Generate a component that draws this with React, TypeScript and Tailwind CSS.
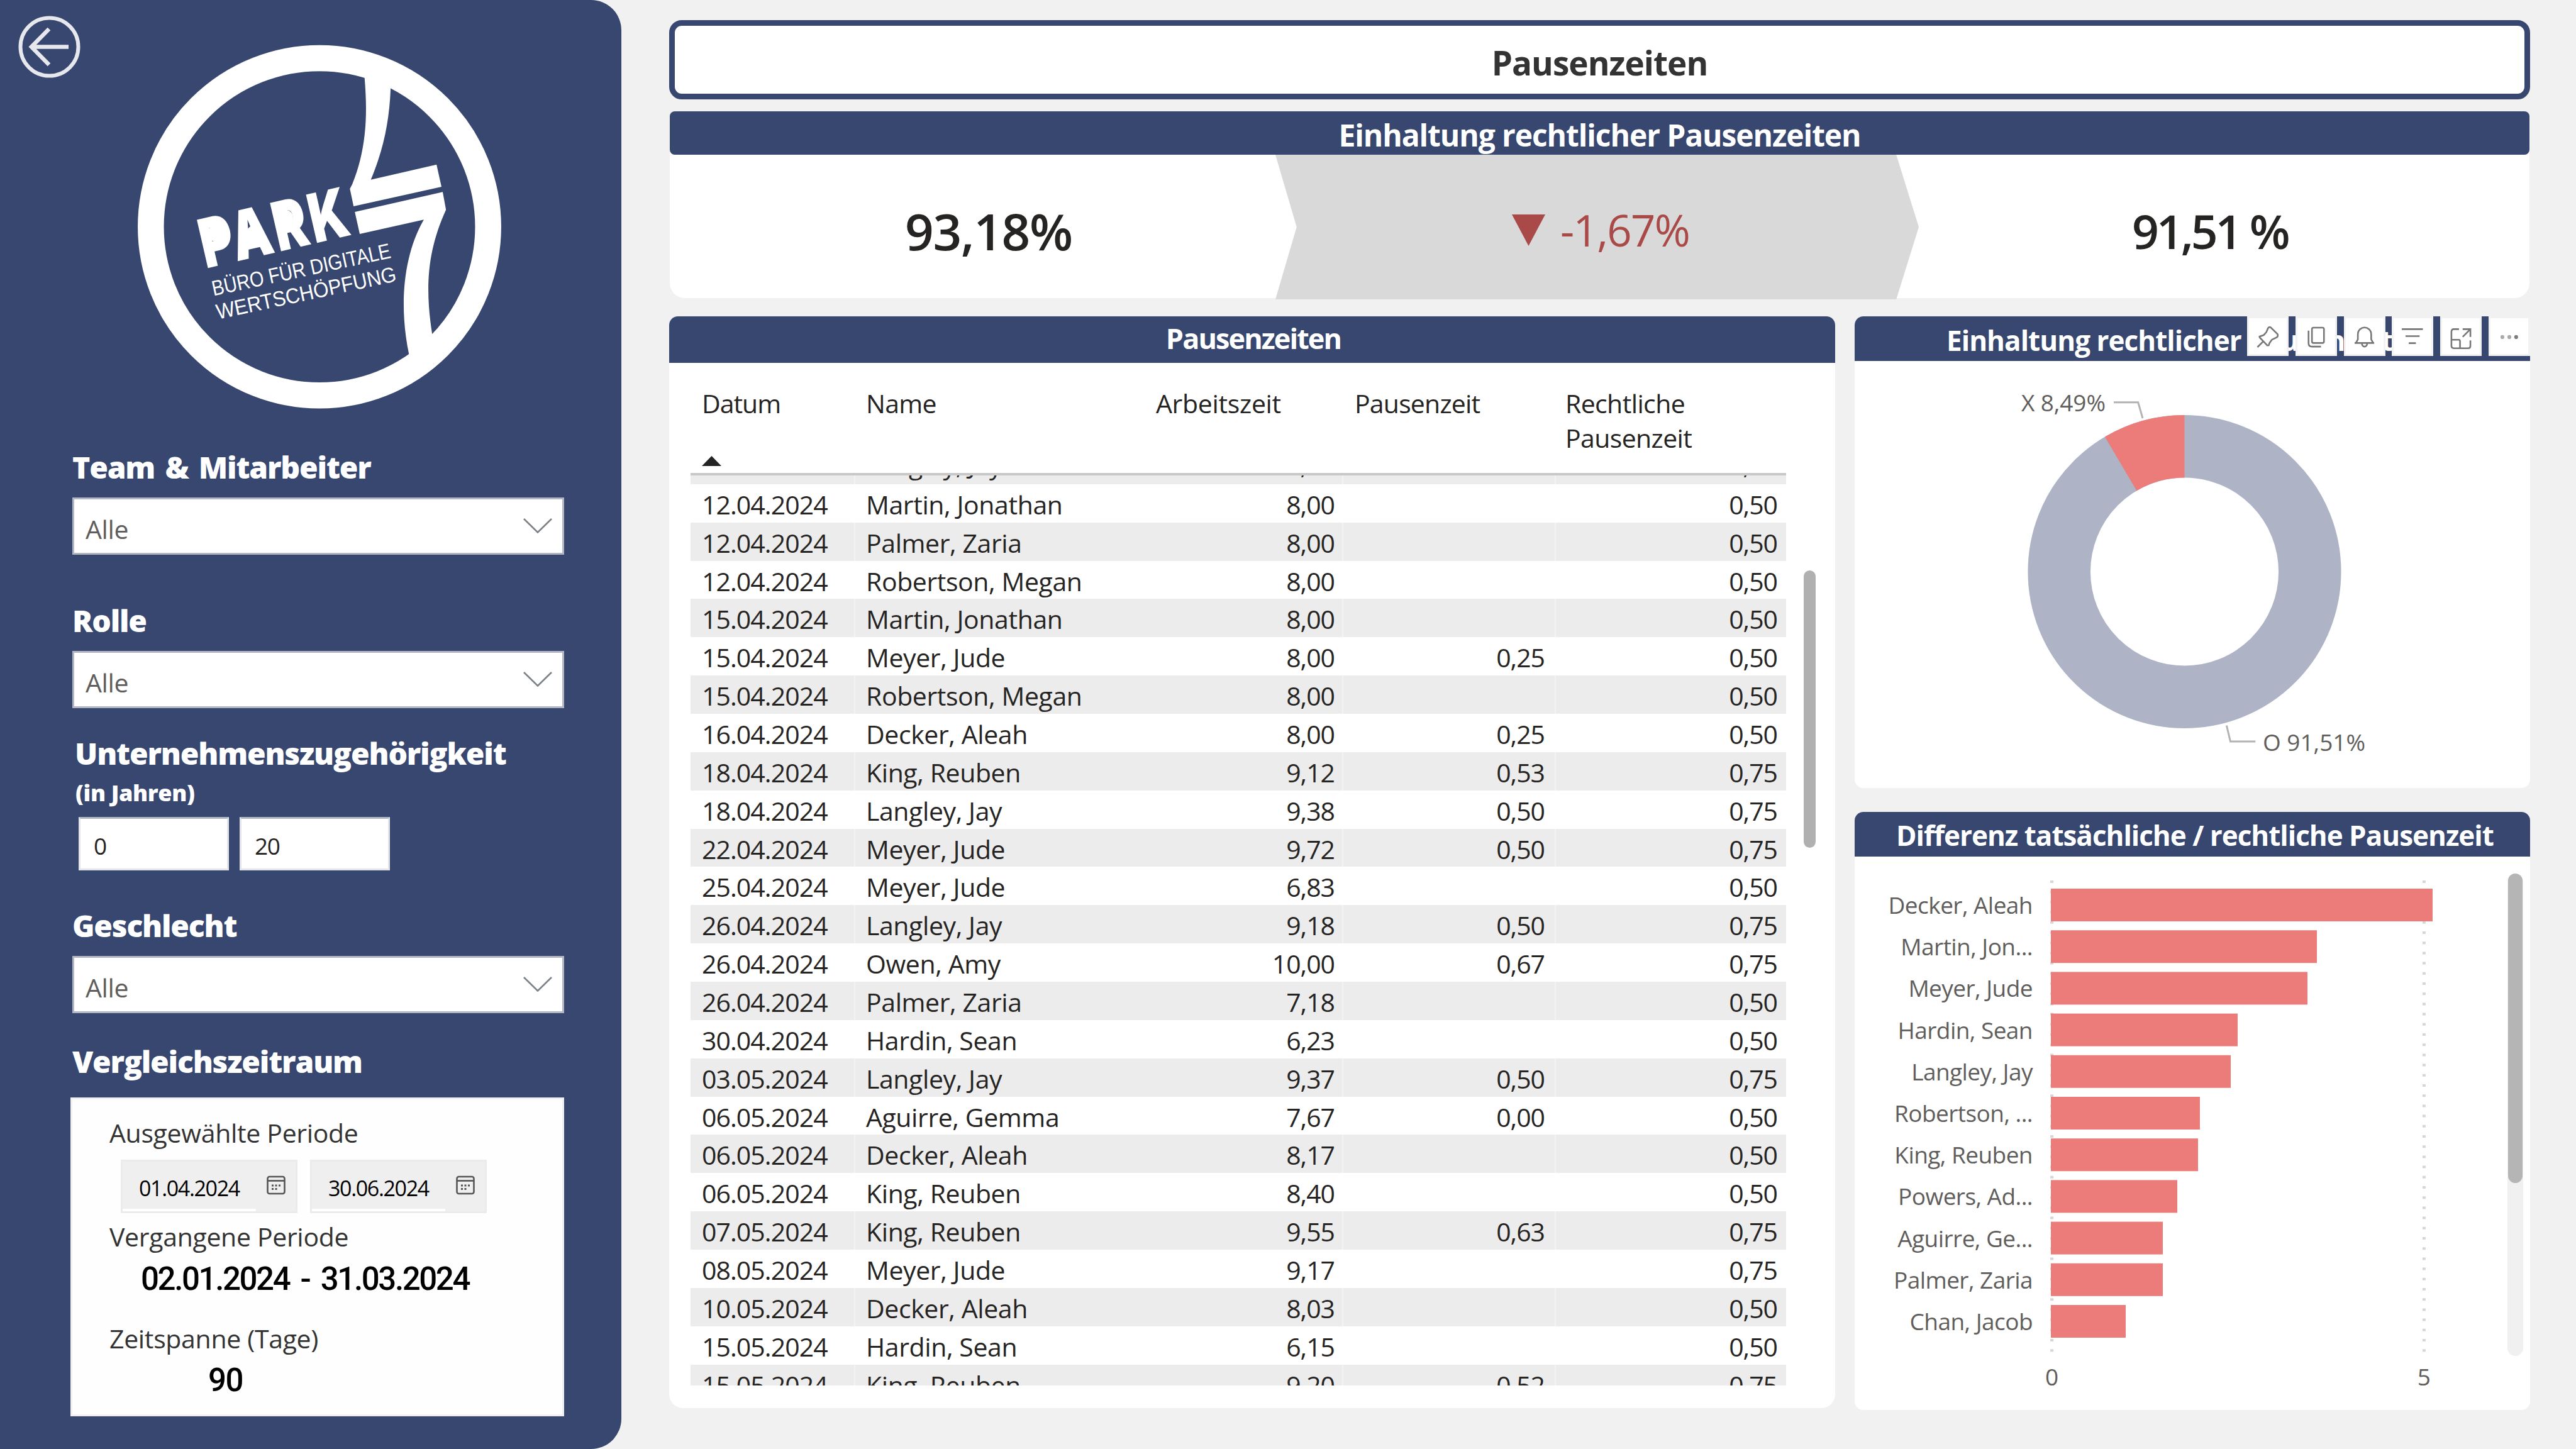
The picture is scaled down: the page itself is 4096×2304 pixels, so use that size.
import React from "react";

const SANS = "font-['Open_Sans','Noto_Sans',sans-serif]";

type Row = [string, string, string, string, string];

const rows: Row[] = [
  ["12.04.2024", "Langley, Jay", "8,00", "", "0,50"],
  ["12.04.2024", "Martin, Jonathan", "8,00", "", "0,50"],
  ["12.04.2024", "Palmer, Zaria", "8,00", "", "0,50"],
  ["12.04.2024", "Robertson, Megan", "8,00", "", "0,50"],
  ["15.04.2024", "Martin, Jonathan", "8,00", "", "0,50"],
  ["15.04.2024", "Meyer, Jude", "8,00", "0,25", "0,50"],
  ["15.04.2024", "Robertson, Megan", "8,00", "", "0,50"],
  ["16.04.2024", "Decker, Aleah", "8,00", "0,25", "0,50"],
  ["18.04.2024", "King, Reuben", "9,12", "0,53", "0,75"],
  ["18.04.2024", "Langley, Jay", "9,38", "0,50", "0,75"],
  ["22.04.2024", "Meyer, Jude", "9,72", "0,50", "0,75"],
  ["25.04.2024", "Meyer, Jude", "6,83", "", "0,50"],
  ["26.04.2024", "Langley, Jay", "9,18", "0,50", "0,75"],
  ["26.04.2024", "Owen, Amy", "10,00", "0,67", "0,75"],
  ["26.04.2024", "Palmer, Zaria", "7,18", "", "0,50"],
  ["30.04.2024", "Hardin, Sean", "6,23", "", "0,50"],
  ["03.05.2024", "Langley, Jay", "9,37", "0,50", "0,75"],
  ["06.05.2024", "Aguirre, Gemma", "7,67", "0,00", "0,50"],
  ["06.05.2024", "Decker, Aleah", "8,17", "", "0,50"],
  ["06.05.2024", "King, Reuben", "8,40", "", "0,50"],
  ["07.05.2024", "King, Reuben", "9,55", "0,63", "0,75"],
  ["08.05.2024", "Meyer, Jude", "9,17", "", "0,75"],
  ["10.05.2024", "Decker, Aleah", "8,03", "", "0,50"],
  ["15.05.2024", "Hardin, Sean", "6,15", "", "0,50"],
  ["15.05.2024", "King, Reuben", "9,20", "0,52", "0,75"],
];

const bars: [string, number][] = [
  ["Decker, Aleah", 607],
  ["Martin, Jon...", 423],
  ["Meyer, Jude", 408],
  ["Hardin, Sean", 297],
  ["Langley, Jay", 286],
  ["Robertson, ...", 237],
  ["King, Reuben", 234],
  ["Powers, Ad...", 201],
  ["Aguirre, Ge...", 178],
  ["Palmer, Zaria", 178],
  ["Chan, Jacob", 119],
];

function BackIcon() {
  return (
    <svg className="mt-[25px] h-[99px] w-[99px] shrink-0" viewBox="0 0 99 99" fill="none" stroke="#e7e8ee">
      <circle cx="49.5" cy="49.5" r="46" strokeWidth="6" />
      <path d="M80 49.5H22M49 21L21 49.5L49 78" strokeWidth="6.5" />
    </svg>
  );
}

function Logo() {
  return (
    <svg className="mt-[71px] ml-[90px] h-[580px] w-[580px] shrink-0" viewBox="218 71 580 580" fill="#fff">
      <circle cx="508" cy="360.6" r="268.2" fill="none" stroke="#fff" strokeWidth="41.5" />
      <g transform="scale(.653 .4536)">
        <path d="M886 230L888 278C895 400 893 520 858 645L852 662L861 723L1075 655L1063 577L903 630C935 520 948 420 951 315L951 260Z" />
        <path d="M864 743L1078 673L1086 735C1040 880 1035 1010 1052 1168L1060 1240L990 1310L996 1243C972 1080 980 900 1032 770L876 820Z" />
      </g>
      <g transform="translate(330 426.4) rotate(-13)">
        <text
          x="-3"
          y="0"
          fontFamily="Inter, sans-serif"
          fontWeight="900"
          fontSize="108"
          letterSpacing="6"
          textLength="244"
          lengthAdjust="spacingAndGlyphs"
        >
          PARK
        </text>
        <ellipse cx="24" cy="-51" rx="13" ry="12" />
        <ellipse cx="138" cy="-51" rx="13" ry="12" />
        <path d="M72 -44L64 -14H90L82 -50Z" />
        <g transform="rotate(.9)" fontFamily="'Liberation Sans', sans-serif" fontSize="34">
          <text x="0" y="45" textLength="290" lengthAdjust="spacingAndGlyphs">
            BÜRO FÜR DIGITALE
          </text>
          <text x="-1" y="83" textLength="292" lengthAdjust="spacingAndGlyphs">
            WERTSCHÖPFUNG
          </text>
        </g>
      </g>
    </svg>
  );
}

function Heading({ children }: { children: React.ReactNode }) {
  return (
    <div className="h-[60px] text-[48px] leading-[62px] font-extrabold tracking-[-0.025em] whitespace-nowrap text-white [word-spacing:5px]">
      {children}
    </div>
  );
}

function Select() {
  return (
    <div className="mt-[19px] flex h-[91px] w-[782px] items-center justify-between border-[3px] border-[#b3b6c3] bg-white pr-[16px] pl-[18px] text-[41px] text-[#605e5c]">
      <span className="pt-[9px] leading-[56px] tracking-[-0.01em]">Alle</span>
      <svg className="mb-[1px] h-[24px] w-[46px]" viewBox="0 0 46 24" fill="none" stroke="#7d8288" strokeWidth="2.6">
        <path d="M1 1L23 22.500L45 1" />
      </svg>
    </div>
  );
}

function NumberBox({ value }: { value: string }) {
  return (
    <div className="h-[85px] w-[239px] border-[3px] border-[#e4e5ea] border-t-[#b3b6c3] bg-white pt-[2px] pl-[21px] text-[37px] leading-[82px] tracking-[-0.04em] text-[#252423]">
      {value}
    </div>
  );
}

function DateBox({ value }: { value: string }) {
  return (
    <div className="flex h-[85px] w-[281px] border-[3px] border-[#ebebeb] bg-[#efefef]">
      <div className="h-[79px] w-[212px] border-b-[4px] border-white pl-[26px] text-[34px] leading-[84px] tracking-[-0.04em] text-black">
        {value}
      </div>
      <svg className="mt-[22px] ml-[17px] h-[32px] w-[30px]" viewBox="0 0 30 32" fill="none" stroke="#555" strokeWidth="2.600">
        <rect x="1.500" y="2" width="27" height="27" rx="3" />
        <path d="M2 8.500H28" />
        <path d="M8 16H11M13.500 16H16.500M19 16H22M8 21.500H11M13.500 21.500H16.500" strokeWidth="3" />
      </svg>
    </div>
  );
}

function PeriodCard() {
  return (
    <div className="mt-[28px] -ml-[3px] h-[507px] w-[785px] border-[3px] border-[#f0f0f3] bg-[#fefefe] pt-[25px] pl-[59px] text-[41px] leading-[56px] tracking-[-0.008em] whitespace-nowrap text-[#333]">
      <div className="h-[56px]">Ausgewählte Periode</div>
      <div className="mt-[15px] ml-[18px] flex gap-[20px]">
        <DateBox value="01.04.2024" />
        <DateBox value="30.06.2024" />
      </div>
      <div className="mt-[9px] h-[56px]">Vergangene Periode</div>
      <div className="mt-[10px] h-[60px] pl-[50px] font-['Roboto',sans-serif] text-[51px] leading-[60px] font-medium tracking-[-0.047em] text-black [word-spacing:7px]">
        02.01.2024 - 31.03.2024
      </div>
      <div className="mt-[36px] h-[56px]">Zeitspanne (Tage)</div>
      <div className="mt-[9px] h-[60px] pl-[157px] font-['Roboto',sans-serif] text-[51px] leading-[60px] font-medium tracking-[-0.03em] text-black">
        90
      </div>
    </div>
  );
}

function Sidebar() {
  return (
    <aside className="h-[2304px] w-[988px] shrink-0 rounded-r-[48px] bg-[#38476f]">
      <div className="flex h-[712px] items-start pl-[29px]">
        <BackIcon />
        <Logo />
      </div>
      <div className="pl-[115px]">
        <div className="h-[244px]">
          <Heading>Team &amp; Mitarbeiter</Heading>
          <Select />
        </div>
        <div className="h-[211px]">
          <Heading>Rolle</Heading>
          <Select />
        </div>
        <div className="h-[274px] pl-[4px]">
          <Heading>Unternehmenszugehörigkeit</Heading>
          <div className="mt-[11px] h-[44px] pl-[1px] text-[36px] leading-[46px] font-extrabold tracking-[-0.01em] text-white">
            (in Jahren)
          </div>
          <div className="mt-[17px] flex gap-[17px] pl-[6px]">
            <NumberBox value="0" />
            <NumberBox value="20" />
          </div>
        </div>
        <div className="h-[216px]">
          <Heading>Geschlecht</Heading>
          <Select />
        </div>
        <Heading>Vergleichszeitraum</Heading>
        <PeriodCard />
      </div>
    </aside>
  );
}

function Kpis() {
  return (
    <section className="mt-[19px] ml-[1px] h-[297px] w-[2957px] rounded-t-[8px] rounded-b-[24px] bg-white">
      <div className="h-[69px] rounded-[8px] bg-[#38476f] text-center text-[48px] leading-[75px] font-bold tracking-[-0.023em] text-white">
        Einhaltung rechtlicher Pausenzeiten
      </div>
      <div className="flex h-[229px]">
        <div className="w-[963px] pl-[374px] text-[80px] leading-[242px] font-semibold tracking-[-0.017em] whitespace-nowrap text-[#252423]">
          93,18%
        </div>
        <div className="flex h-[230px] w-[1023px] items-start bg-[#d9d9d9] pl-[376px] text-[#a94a48] [clip-path:polygon(0_0,96.500%_0,100%_50%,96.500%_100%,0_100%,3.300%_50%)]">
          <svg className="mt-[95px] h-[50px] w-[53px]" viewBox="0 0 53 50" fill="currentColor">
            <path d="M0 0H53L26.500 50Z" />
          </svg>
          <span className="ml-[24px] text-[69px] leading-[238px] tracking-[-0.025em]">-1,67%</span>
        </div>
        <div className="pl-[339px] text-[75px] leading-[242px] font-semibold tracking-[-0.055em] whitespace-nowrap text-[#252423]">
          91,51 %
        </div>
      </div>
    </section>
  );
}

const GRID = "grid grid-cols-[262px_460px_316px_338px_366px]";

function TableCard() {
  return (
    <section className="flex h-[1736px] w-[1854px] flex-col rounded-t-[14px] rounded-b-[22px] bg-white">
      <div className="h-[74px] rounded-t-[14px] bg-[#38476f] pl-[4px] text-center text-[45px] leading-[70px] font-bold tracking-[-0.043em] text-white">
        Pausenzeiten
      </div>
      <div className="ml-[34px] w-[1742px] text-[41px] tracking-[-0.025em] text-[#252423]">
        <div className={`${GRID} h-[179px] border-b-[4px] border-[#c8c8c8] pt-[37px] leading-[55px]`}>
          <div className="pl-[18px]">
            Datum
            <svg className="mt-[56px] h-[16px] w-[31px]" viewBox="0 0 31 16" fill="#252423">
              <path d="M0 16L15.500 0L31 16Z" />
            </svg>
          </div>
          <div className="pl-[17px] tracking-[-0.018em]">Name</div>
          <div className="pl-[18px] tracking-[-0.008em]">Arbeitszeit</div>
          <div className="pl-[18px] tracking-[-0.02em]">Pausenzeit</div>
          <div className="pl-[15px] tracking-[-0.015em]">
            Rechtliche
            <br />
            Pausenzeit
          </div>
        </div>
        <div className="h-[1447px] overflow-hidden">
          <div className="-mt-[47px]">
            {rows.map((r, i) => (
              <div
                key={i}
                className={`${GRID} h-[60.87px] whitespace-nowrap ${i === 0 ? "leading-[58px]" : "leading-[64px]"} ${i % 2 === 0 ? "bg-[#ececec]" : "bg-white"}`}
              >
                <div className="h-[60.87px] border-r-2 border-white/40 pl-[18px] tracking-[-0.023em]">{r[0]}</div>
                <div className="pl-[17px] tracking-[-0.010em]">{r[1]}</div>
                <div className="h-[60.87px] border-r-2 border-white/40 pr-[12px] text-right">{r[2]}</div>
                <div className="h-[60.87px] border-r-2 border-white/40 pr-[16px] text-right">{r[3]}</div>
                <div className="pr-[14px] text-right">{r[4]}</div>
              </div>
            ))}
          </div>
        </div>
      </div>
    </section>
  );
}

function ToolButton({ children }: { children: React.ReactNode }) {
  return (
    <div className="h-[63px] w-[66px] border-[3px] border-[#f2f2f2] bg-white">
      <svg
        className="-mt-[3px] -ml-[3px] h-[63px] w-[66px]"
        viewBox="0 0 280 266"
        preserveAspectRatio="none"
        fill="none"
        stroke="#777"
        strokeWidth="11"
      >
        {children}
      </svg>
    </div>
  );
}

function Toolbar() {
  return (
    <div className="absolute top-0 right-0 flex gap-[10.8px]">
      <ToolButton>
        <path d="M70 207L110 167M85 142L84 136L112 126L130 106L142 78Q150 68 160 75L206 120Q210 132 202 140L167 157L152 178L146 194L136 195Z" />
      </ToolButton>
      <ToolButton>
        <rect x="111" y="76" width="81" height="103" rx="10" />
        <path d="M88 96V180Q88 203 112 203H172" />
      </ToolButton>
      <ToolButton>
        <path d="M72 179H204M82 177L94 155V122C94 90 118 75 139 75C160 75 184 90 184 122V155L196 177M120 181Q124 203 139 203Q154 203 158 181" />
      </ToolButton>
      <ToolButton>
        <path d="M68 86H210M93 133H188M115 180H163" />
      </ToolButton>
      <ToolButton>
        <path d="M127 86H92Q76 86 76 104V200Q76 214 92 214H190Q204 214 204 198V162M76 157H126Q134 157 134 168V214M152 86H204V138M204 86L152 138" />
      </ToolButton>
      <ToolButton>
        <g stroke="none">
          <circle cx="93" cy="139" r="13" fill="#aaa" />
          <circle cx="140" cy="139" r="13" fill="#aaa" />
          <circle cx="186" cy="139" r="13" fill="#7c7c7c" />
        </g>
      </ToolButton>
    </div>
  );
}

function DonutCard() {
  return (
    <section className="relative h-[750px] w-[1074px] rounded-[14px] bg-white">
      <div className="h-[71px] rounded-t-[14px] bg-[#38476f] pl-[146px] text-[44px] leading-[76px] font-bold tracking-[-0.022em] whitespace-nowrap text-white">
        Einhaltung rechtlicher Pausenzeiten
      </div>
      <svg className="h-[679px] w-[1074px]" viewBox="2949 574 1074 679" fill="none">
        <circle cx="3473.500" cy="909" r="199.300" stroke="#aeb3c5" strokeWidth="99.500" />
        <circle
          cx="3473.500"
          cy="909"
          r="199.300"
          stroke="#eb7c7a"
          strokeWidth="99.500"
          pathLength="100"
          strokeDasharray="8.490 91.510"
          transform="rotate(-120.560 3473.500 909)"
        />
        <path d="M3361 639.700H3399.700L3407 665M3540.400 1153.600L3546.500 1179H3586.300" stroke="#b3b3b3" strokeWidth="3" />
        <g fontFamily="'Open Sans', 'Noto Sans', sans-serif" fontSize="37" fill="#605e5c">
          <text x="3214" y="654" textLength="134">
            X 8,49%
          </text>
          <text x="3598" y="1194" textLength="163">
            O 91,51%
          </text>
        </g>
      </svg>
      <Toolbar />
    </section>
  );
}

function BarCard() {
  return (
    <section className="mt-[38px] h-[951px] w-[1074px] rounded-[14px] bg-white">
      <div className="h-[71px] rounded-t-[14px] bg-[#38476f] pl-[66px] text-[44px] leading-[74px] font-bold tracking-[-0.023em] whitespace-nowrap text-white">
        Differenz tatsächliche / rechtliche Pausenzeit
      </div>
      <div className="flex h-[880px] pt-[27px]">
        <div className="w-[283px] pt-[17px] text-right text-[37px] leading-[66.2px] tracking-[-0.015em] whitespace-nowrap text-[#605e5c]">
          {bars.map(([name]) => (
            <div key={name} className="h-[66.2px]">
              {name}
            </div>
          ))}
        </div>
        <svg className="ml-[19px] h-[840px] w-[640px]" viewBox="3251 1389 640 840">
          <path d="M3262.600 1400V2158M3854.400 1400V2158" stroke="#d6d6d6" strokeWidth="5" strokeDasharray="4 12.200" />
          {bars.map(([name, w], i) => (
            <rect key={name} x="3261" y={1413 + i * 66.2} width={w} height="52" fill="#eb7c7a" />
          ))}
          <g fontFamily="'Open Sans', 'Noto Sans', sans-serif" fontSize="37" fill="#605e5c" textAnchor="middle">
            <text x="3262.600" y="2203">0</text>
            <text x="3854.400" y="2203">5</text>
          </g>
        </svg>
        <div className="ml-[96px] h-[767px] w-[25px] rounded-full bg-[#f0f0f0]">
          <div className="mx-auto h-[492px] w-[23px] rounded-full bg-[#b5b5b5]" />
        </div>
      </div>
    </section>
  );
}

export default function App() {
  return (
    <div className={`${SANS} flex h-[2304px] w-[4096px] overflow-hidden bg-[#f1f1f1]`}>
      <Sidebar />
      <main className="pt-[32px] pl-[76px]">
        <h1 className="h-[126px] w-[2959px] rounded-[20px] border-[9px] border-[#38476f] bg-white text-center text-[53px] leading-[117px] font-bold tracking-[-0.018em] text-[#333]">
          Pausenzeiten
        </h1>
        <Kpis />
        <div className="mt-[29px] flex gap-[31px]">
          <div className="relative">
            <TableCard />
            <div className="absolute top-[404px] right-[31px] h-[441px] w-[19px] rounded-full bg-[#b0b0b0]" />
          </div>
          <div>
            <DonutCard />
            <BarCard />
          </div>
        </div>
      </main>
    </div>
  );
}
